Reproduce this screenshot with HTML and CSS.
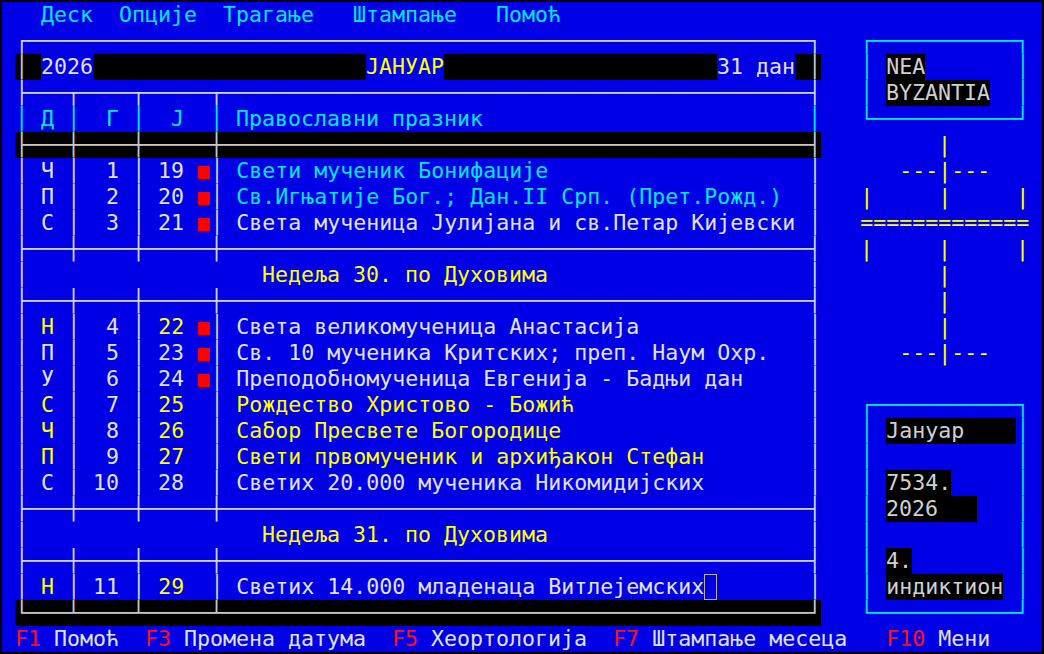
FILE: index.html
```html
<!DOCTYPE html>
<html lang="sr">
<head>
<meta charset="UTF-8">
<title>Календар</title>
<link rel="stylesheet" href="styles.css">
</head>
<body>

<div class="screen">
<div class="row c">   Деск  Опције  Трагање   Штампање   Помоћ</div>
<div class="row"> <span class="f">┌────────────────────────────────────────────────────────────┐</span>   <span class="c">┌───────────┐</span></div>
<div class="row"> <span class="k f">│ </span><span class="w">2026</span><span class="k">                     </span><span class="y">ЈАНУАР</span><span class="k">                     </span><span class="w">31 дан</span><span class="k f"> │</span>   <span class="c">│</span> <span class="k">NEA</span>       <span class="c">│</span></div>
<div class="row"> <span class="f">├───┬────┬─────┬─────────────────────────────────────────────┤</span>   <span class="c">│</span> <span class="k">BYZANTIA</span>  <span class="c">│</span></div>
<div class="row c"> │ Д │  Г │  Ј  │ Православни празник                         │   └───────────┘</div>
<div class="row"> <span class="k f">├───┼────┼─────┼─────────────────────────────────────────────┤</span>         <span class="y">|</span></div>

<div class="row"> <span class="f">│</span> Ч <span class="f">│</span>  1 <span class="f">│</span> 19 <span class="sq"> </span><span class="f">│</span> <span class="c">Свети мученик Бонифације</span>                    <span class="f">│</span>      <span class="y">---|---</span></div>
<div class="row"> <span class="f">│</span> П <span class="f">│</span>  2 <span class="f">│</span> 20 <span class="sq"> </span><span class="f">│</span> <span class="c">Св.Игњатије Бог.; Дан.II Срп. (Прет.Рожд.)</span>  <span class="f">│</span>   <span class="y">|     |     |</span></div>
<div class="row"> <span class="f">│</span> С <span class="f">│</span>  3 <span class="f">│</span> 21 <span class="sq"> </span><span class="f">│</span> Света мученица Јулијана и св.Петар Кијевски <span class="f">│</span>   <span class="y">=============</span></div>
<div class="row"> <span class="f">├───┼────┼─────┼─────────────────────────────────────────────┤</span>   <span class="y">|     |     |</span></div>
<div class="row"> <span class="f">│</span>                  <span class="y">Недеља 30. по Духовима</span>                    <span class="f">│</span>         <span class="y">|</span></div>
<div class="row"> <span class="f">├───┼────┼─────┼─────────────────────────────────────────────┤</span>         <span class="y">|</span></div>

<div class="row"> <span class="f">│</span> <span class="y">Н</span> <span class="f">│</span>  4 <span class="f">│</span> <span class="y">22</span> <span class="sq"> </span><span class="f">│</span> Света великомученица Анастасија             <span class="f">│</span>         <span class="y">|</span></div>
<div class="row"> <span class="f">│</span> П <span class="f">│</span>  5 <span class="f">│</span> 23 <span class="sq"> </span><span class="f">│</span> Св. 10 мученика Критских; преп. Наум Охр.   <span class="f">│</span>      <span class="y">---|---</span></div>
<div class="row"> <span class="f">│</span> У <span class="f">│</span>  6 <span class="f">│</span> 24 <span class="sq"> </span><span class="f">│</span> Преподобномученица Евгенија - Бадњи дан     <span class="f">│</span></div>
<div class="row"> <span class="f">│</span> <span class="y">С</span> <span class="f">│</span>  7 <span class="f">│</span> <span class="y">25</span>  <span class="f">│</span> <span class="y">Рождество Христово - Божић</span>                  <span class="f">│</span>   <span class="c">┌───────────┐</span></div>
<div class="row"> <span class="f">│</span> <span class="y">Ч</span> <span class="f">│</span>  8 <span class="f">│</span> <span class="y">26</span>  <span class="f">│</span> <span class="y">Сабор Пресвете Богородице</span>                   <span class="f">│</span>   <span class="c">│</span> <span class="k">Јануар    </span><span class="c">│</span></div>
<div class="row"> <span class="f">│</span> <span class="y">П</span> <span class="f">│</span>  9 <span class="f">│</span> <span class="y">27</span>  <span class="f">│</span> <span class="y">Свети првомученик и архиђакон Стефан</span>        <span class="f">│</span>   <span class="c">│           │</span></div>
<div class="row"> <span class="f">│</span> С <span class="f">│</span> 10 <span class="f">│</span> 28  <span class="f">│</span> Светих 20.000 мученика Никомидијских        <span class="f">│</span>   <span class="c">│</span> <span class="k">7534.</span>     <span class="c">│</span></div>
<div class="row"> <span class="f">├───┼────┼─────┼─────────────────────────────────────────────┤</span>   <span class="c">│</span> <span class="k">2026   </span>   <span class="c">│</span></div>
<div class="row"> <span class="f">│</span>                  <span class="y">Недеља 31. по Духовима</span>                    <span class="f">│</span>   <span class="c">│           │</span></div>
<div class="row"> <span class="f">├───┼────┼─────┼─────────────────────────────────────────────┤</span>   <span class="c">│</span> <span class="k">4.</span>        <span class="c">│</span></div>

<div class="row"> <span class="f">│</span> <span class="y">Н</span> <span class="f">│</span> 11 <span class="f">│</span> <span class="y">29</span>  <span class="f">│</span> Светих 14.000 младенаца Витлејемских<span class="cur"> </span>       <span class="f">│</span>   <span class="c">│</span> <span class="k">индиктион</span> <span class="c">│</span></div>
<div class="row"> <span class="k f">└───┴────┴─────┴─────────────────────────────────────────────┘</span>   <span class="c">└───────────┘</span></div>
<div class="row"> <span class="r">F1</span> Помоћ  <span class="r">F3</span> Промена датума  <span class="r">F5</span> Хеортологија  <span class="r">F7</span> Штампање месеца   <span class="r">F10</span> Мени</div>
</div>

</body>
</html>
```

FILE: styles.css
```css
body {
  margin: 0;
  background-color: #000;
}

.screen {
  margin: 2px;
  width: 1040px;
  height: 650px;
  overflow: hidden;
  background-color: #0000e6;
  color: #e2e2e2;
  font-family: "DejaVu Sans Mono", monospace;
  font-size: 21.6px;
  line-height: 26px;
}

.row {
  height: 26px;
  white-space: pre;
}

/* text colours */
.c { color: #00e6ee; }
.w { color: #e2e2e2; }
.y { color: #ffff00; }
.r { color: #ff1010; }
.f { color: #d2d2d2; }

/* black cells */
.k {
  display: inline-block;
  background-color: #000;
  color: #d0d0d0;
}

.k.f {
  color: #c8c8c8;
}

/* red marker in the Julian date column */
.sq {
  display: inline-block;
  background: linear-gradient(#ff0000, #ff0000) 1px 8px / 12px 13px no-repeat;
}

.cur {
  display: inline-block;
  box-shadow: inset 0 0 0 1px #b8b08c;
}
```
